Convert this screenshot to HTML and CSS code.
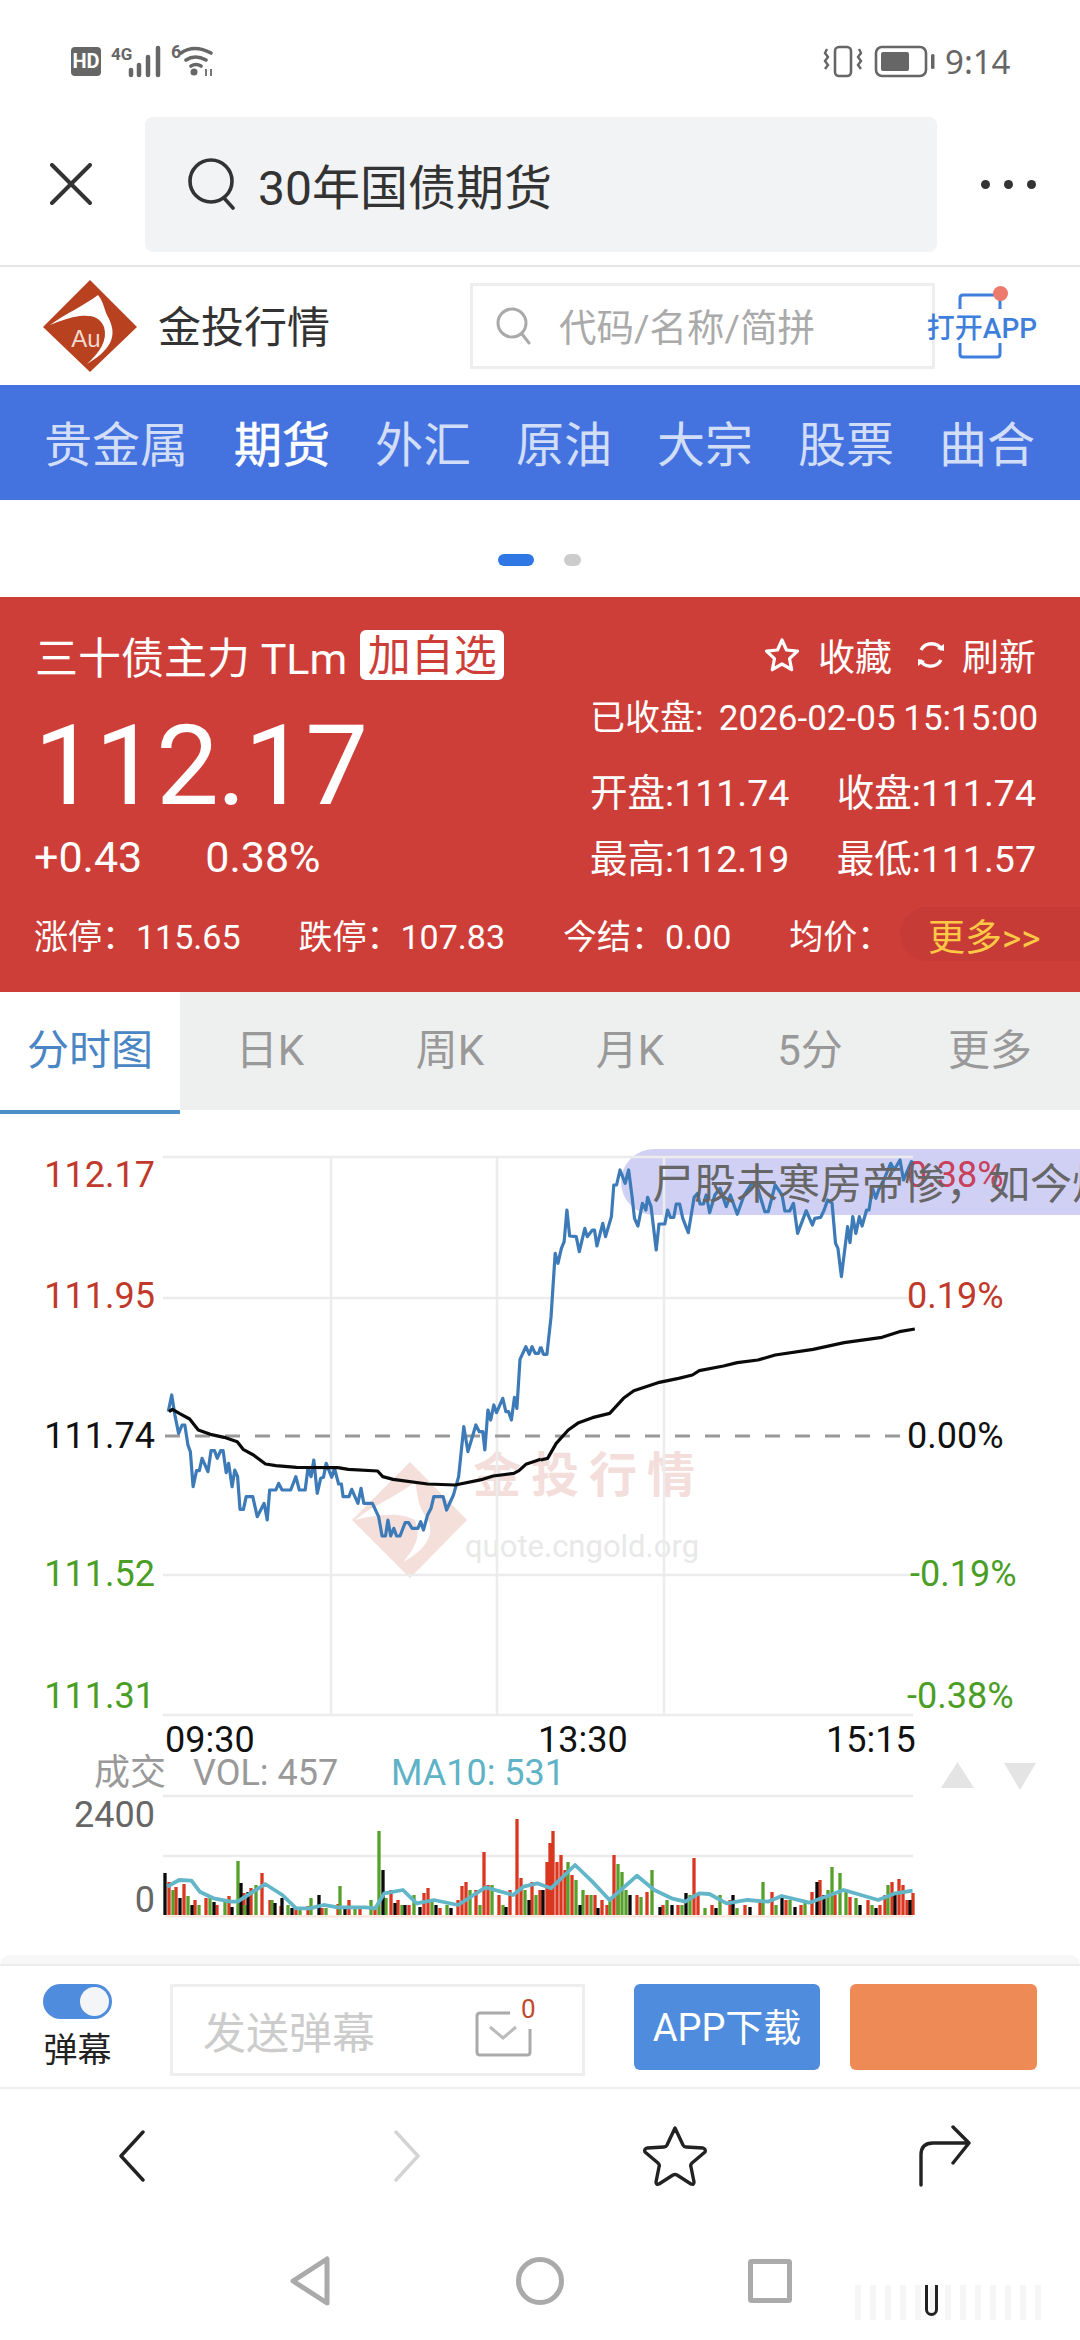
FILE: index.html
```html
<!DOCTYPE html>
<html lang="zh-CN">
<head>
<meta charset="utf-8">
<title>三十债主力 TLm</title>
<link rel="stylesheet" href="styles.css">
</head>
<body>
<div class="page">
  <div class="status">
    <svg class="status-left" width="145" height="34" viewBox="71 45 145 34">
      <rect x="71" y="47" width="30" height="29" rx="4" fill="#666"/>
      <text x="86" y="68" class="hd">HD</text>
      <text x="111" y="60" class="tiny">4G</text>
      <path d="M131 70v5M139 65v10M148 57v18M158 48v27" stroke="#666" stroke-width="4.5" stroke-linecap="round" fill="none"/>
      <text x="171" y="58" class="tiny big6">6</text>
      <path d="M181 53q13-9 30 0M186 60q9-6 20 0M191 66q5-3 10 0" stroke="#666" stroke-width="3.6" stroke-linecap="round" fill="none"/>
      <circle cx="194" cy="72" r="3.5" fill="#666"/>
      <path d="M206 69v7M211 69v7" stroke="#777" stroke-width="2" fill="none"/>
    </svg>
    <svg class="status-right" width="114" height="34" viewBox="821 45 114 34">
      <rect x="834" y="47" width="16" height="29" rx="4" fill="none" stroke="#666" stroke-width="2.6"/>
      <path d="M826 49l-2 4 3 4-3 4 3 4-3 4M858 49l2 4-3 4 3 4-3 4 3 4" fill="none" stroke="#666" stroke-width="2.4"/>
      <rect x="875" y="47" width="50" height="29" rx="6" fill="none" stroke="#666" stroke-width="2.6"/>
      <rect x="880" y="52" width="28" height="19" rx="2" fill="#666"/>
      <rect x="930" y="54" width="3.5" height="15" rx="1.5" fill="#666"/>
    </svg>
    <span class="clock">9:14</span>
  </div>

  <div class="topbar">
    <svg class="close" width="42" height="42" viewBox="0 0 42 42"><path d="M2 2l38 38M40 2L2 40" stroke="#333" stroke-width="4" stroke-linecap="round"/></svg>
    <div class="urlbox">
      <svg width="48" height="52" viewBox="0 0 48 52"><circle cx="23" cy="23" r="21" fill="none" stroke="#333" stroke-width="3.6"/><path d="M36 40l9 10" stroke="#333" stroke-width="3.6" stroke-linecap="round"/></svg>
      <span>30年国债期货</span>
    </div>
    <div class="dots"><i></i><i></i><i></i></div>
  </div>

  <div class="brandbar">
    <svg class="logo" width="94" height="93" viewBox="43 278 94 93">
      <path d="M90 278l47 47-47 45-47-45z" fill="#b8411f"/>
      <path d="M50 323C65 312 85 303 98 293c6 7 6 15 10 22 8 15 8 30-21 47 13-12 21-24 17-37-4-10-12-12-24-11-10 1-20 5-30 9z" fill="#fff"/>
      <text x="86" y="345" class="au">Au</text>
    </svg>
    <span class="brandname">金投行情</span>
    <div class="codesearch">
      <svg width="36" height="38" viewBox="0 0 36 38"><circle cx="17" cy="16" r="14" fill="none" stroke="#aaa" stroke-width="3"/><path d="M27 27l7 9" stroke="#aaa" stroke-width="3" stroke-linecap="round"/></svg>
      <span>代码/名称/简拼</span>
    </div>
    <div class="openapp">
      <svg class="openapp-frame" width="44" height="66" viewBox="0 0 44 66">
        <path d="M2 16V5q0-3 3-3h34q3 0 3 3v11M2 50v11q0 3 3 3h34q3 0 3-3V50" fill="none" stroke="#3f7fdc" stroke-width="3"/>
      </svg>
      <i class="openapp-dot"></i>
      <span>打开APP</span>
    </div>
  </div>

  <nav class="channels">
    <a>贵金属</a><a class="on">期货</a><a>外汇</a><a>原油</a><a>大宗</a><a>股票</a><a>曲合</a>
  </nav>

  <div class="pager"><i class="pill"></i><i class="dot"></i></div>

  <section class="quote">
    <div class="quote-head">
      <div class="qname">三十债主力 TLm<span class="addbtn">加自选</span></div>
      <div class="qacts">
        <svg width="36" height="36" viewBox="0 0 36 36"><path d="M18 3l4.500 10 11 1.200-8 7.500 2.200 11L18 27l-9.700 5.700 2.200-11-8-7.500 11-1.200z" fill="none" stroke="#fff" stroke-width="3.200" stroke-linejoin="round"/></svg>
        <span class="act-fav">收藏</span>
        <svg class="act-ref" width="30" height="34" viewBox="0 0 30 34"><path d="M5 12a12 12 0 0 1 21 0M25 22a12 12 0 0 1-21 0" fill="none" stroke="#fff" stroke-width="3.400"/><path d="M21 11l7 2 0-7zM9 23l-7-2 0 7z" fill="#fff"/></svg>
        <span>刷新</span>
      </div>
    </div>
    <div class="quote-body">
      <div class="qleft">
        <div class="price">112.17</div>
        <div class="change"><span>+0.43</span><span>0.38%</span></div>
      </div>
      <div class="qright">
        <div class="qtime">已收盘:  2026-02-05 15:15:00</div>
        <div class="qrow"><span>开盘:111.74</span><span>收盘:111.74</span></div>
        <div class="qrow"><span>最高:112.19</span><span>最低:111.57</span></div>
      </div>
    </div>
    <div class="quote-foot">
      <span>涨停：115.65</span><span>跌停：107.83</span><span>今结：0.00</span><span>均价：</span>
      <b class="morebtn">更多&gt;&gt;</b>
    </div>
  </section>

  <div class="periods">
    <a class="on">分时图</a><a>日K</a><a>周K</a><a>月K</a><a>5分</a><a>更多</a>
  </div>

  <svg class="chart" width="1080" height="845" viewBox="0 1110 1080 845">
    <g class="wm">
      <path d="M410 1462l57 58-57 58-58-58z" fill="#f4dfda"/>
      <path d="M355 1520c20-16 36-20 60-38 3 12 2 24 12 36 8 14 2 30-24 44 14-16 18-28 12-42-14-8-36-6-60 0z" fill="#fff"/>
      <text x="473" y="1492" class="wm-t">金投行情</text>
      <text x="465" y="1557" class="wm-u">quote.cngold.org</text>
    </g>
    <rect x="621" y="1149" width="520" height="66" rx="33" fill="#d0d0f5"/>
    <path class="grid" d="M163 1157H913M163 1298H913M163 1575H913M163 1715H913M331 1157V1715M497 1157V1715M664 1157V1715M163 1796H913M163 1856H913"/>
    <path class="dash" d="M165 1436H900"/>
    <g transform="translate(0 1120) scale(.34483 .33333)">
      <polyline class="ln blue" points="488,875 498,825 508,890 518,940 528,915 536,915 545,975 552,995 560,1100 570,1052 578,1052 586,1015 603,1055 612,992 622,992 630,1015 640,992 647,992 656,1058 663,1030 673,1100 681,1050 689,1070 696,1168 706,1168 714,1130 733,1130 746,1190 766,1150 775,1200 782,1110 800,1110 808,1090 818,1110 843,1110 858,1070 868,1110 885,1110 893,1045 902,1070 910,1020 920,1120 930,1075 938,1072 946,1030 962,1072 970,1045 982,1092 990,1092 995,1130 1012,1130 1020,1108 1038,1150 1047,1105 1055,1150 1080,1150 1098,1190 1108,1248 1118,1248 1125,1200 1133,1248 1142,1225 1150,1248 1160,1248 1175,1208 1185,1208 1195,1225 1212,1225 1220,1205 1228,1230 1240,1185 1250,1165 1258,1130 1285,1130 1295,1170 1315,1125 1330,1070 1345,920 1357,995 1380,915 1390,935 1400,935 1406,990 1415,870 1423,900 1432,855 1440,878 1458,835 1467,875 1475,875 1483,900 1492,832 1499,865 1508,718 1525,680 1535,703 1543,680 1552,700 1562,700 1568,680"/>
      <polyline class="ln black" points="490,875 500,868 520,880 550,897 575,930 610,943 650,952 688,965 705,988 735,1005 770,1032 800,1037 860,1042 980,1043 1010,1048 1095,1053 1110,1070 1140,1078 1240,1092 1320,1095 1400,1078 1430,1068 1490,1060 1505,1052 1525,1033 1568,1018"/>
    </g>
    <g transform="translate(540.700 1120) scale(.34483 .33333)">
      <polyline class="ln blue" points="0,680 8,703 18,703 30,590 42,400 50,430 60,385 68,365 76,270 84,348 103,350 112,395 128,325 135,350 150,330 156,330 163,378 180,310 188,350 205,290 212,195 220,195 230,150 245,190 255,150 265,230 272,295 282,318 295,250 305,270 310,232 320,260 335,390 343,312 360,312 368,270 376,292 386,292 393,252 403,252 412,295 428,338 445,232 455,220 462,252 472,252 480,225 490,278 505,225 520,205 538,260 550,225 570,283 590,225 612,190 625,190 650,275 660,275 680,195 700,225 708,273 722,273 733,250 745,340 770,272 788,315 795,295 812,292 822,270 832,240 845,250 855,370 862,385 872,470 890,320 897,368 905,290 914,340 924,290 932,318 945,270 952,270 962,205 972,235 980,210 995,180 1015,130 1025,150 1042,120 1052,180 1075,125 1085,130"/>
      <polyline class="ln black" points="0,1020 20,1015 45,970 80,930 110,908 150,893 200,880 240,835 270,812 340,788 400,775 440,765 460,752 530,738 570,728 630,720 680,705 790,688 880,668 990,652 1040,635 1085,627"/>
    </g>
    <text x="155" y="1187" class="yl up end">112.17</text>
    <text x="155" y="1308" class="yl up end">111.95</text>
    <text x="155" y="1448" class="yl end">111.74</text>
    <text x="155" y="1586" class="yl down end">111.52</text>
    <text x="155" y="1708" class="yl down end">111.31</text>
    <text x="907" y="1187" class="yl pink">0.38%</text>
    <text x="907" y="1308" class="yl up">0.19%</text>
    <text x="907" y="1448" class="yl">0.00%</text>
    <text x="910" y="1586" class="yl down">-0.19%</text>
    <text x="907" y="1708" class="yl down">-0.38%</text>
    <text x="652" y="1199" class="danmaku">尸股未寒房帝惨，如今炒</text>
    <text x="165" y="1752" class="yl">09:30</text>
    <text x="538" y="1752" class="yl">13:30</text>
    <text x="826" y="1752" class="yl">15:15</text>
    <text x="94" y="1785" class="vt grey">成交</text>
    <text x="193" y="1785" class="vt grey">VOL: 457</text>
    <text x="391" y="1785" class="vt cyan">MA10: 531</text>
    <polygon points="941,1788 957.500,1762 974,1788" fill="#e4e4e4"/>
    <polygon points="1004,1763 1036,1763 1020,1790" fill="#e4e4e4"/>
    <text x="155" y="1827" class="yl dim end">2400</text>
    <text x="155" y="1912" class="yl dim end">0</text>
    <path class="baseline" d="M165 1916.500H913"/>
    <path class="bar r" d="M169 1882V1915M176 1887V1915M184 1884V1915M195 1900V1915M206 1898V1915M217 1905V1915M229 1896V1915M244 1893V1915M251 1888V1915M262 1873V1915M270 1900V1915M281 1906V1915M296 1908V1915M308 1906V1915M322 1908V1915M338 1904V1915M349 1900V1915M360 1908V1915M375 1908V1915M391 1890V1915M398 1900V1915M409 1905V1915M424 1893V1915M428 1888V1915M440 1908V1915M458 1900V1915M462 1886V1915M466 1882V1915M476 1890V1915M484 1852V1915M488 1885V1915M499 1895V1915M510 1890V1915M517 1819V1915M521 1878V1915M532 1882V1915M540 1890V1915M547 1862V1915M550 1843V1915M553 1831V1915M557 1862V1915M561 1855V1915M565 1870V1915M572 1875V1915M587 1895V1915M595 1895V1915M602 1900V1915M607 1905V1915M614 1855V1915M618 1890V1915M637 1895V1915M647 1892V1915M663 1905V1915M678 1905V1915M694 1858V1915M698 1895V1915M712 1905V1915M730 1900V1915M745 1905V1915M760 1900V1915M772 1892V1915M786 1900V1915M801 1905V1915M812 1892V1915M820 1880V1915M835 1895V1915M850 1897V1915M868 1900V1915M880 1905V1915M885 1895V1915M892 1882V1915M899 1879V1915M903 1885V1915M907 1900V1915M913 1893V1915"/>
    <path class="bar g" d="M173 1890V1915M188 1896V1915M199 1905V1915M210 1898V1915M225 1900V1915M238 1861V1915M245 1905V1915M256 1885V1915M272 1900V1915M288 1905V1915M300 1908V1915M311 1898V1915M326 1908V1915M340 1886V1915M355 1908V1915M371 1900V1915M379 1831V1915M386 1898V1915M402 1905V1915M414 1895V1915M432 1900V1915M447 1905V1915M470 1890V1915M480 1905V1915M492 1885V1915M503 1905V1915M525 1890V1915M536 1895V1915M568 1862V1915M576 1880V1915M583 1890V1915M591 1895V1915M610 1900V1915M618 1864V1915M622 1872V1915M626 1890V1915M641 1897V1915M652 1870V1915M667 1900V1915M682 1905V1915M690 1895V1915M705 1908V1915M720 1895V1915M737 1908V1915M763 1882V1915M776 1905V1915M790 1900V1915M805 1900V1915M828 1890V1915M832 1867V1915M840 1873V1915M846 1890V1915M856 1898V1915M872 1905V1915M888 1885V1915"/>
    <path class="bar k" d="M165 1873V1915M180 1898V1915M192 1905V1915M214 1902V1915M232 1907V1915M241 1883V1915M248 1892V1915M275 1903V1915M282 1898V1915M292 1908V1915M319 1895V1915M345 1908V1915M383 1870V1915M395 1903V1915M405 1905V1915M420 1907V1915M436 1905V1915M451 1908V1915M506 1907V1915M529 1900V1915M543 1890V1915M580 1905V1915M598 1908V1915M630 1895V1915M660 1907V1915M672 1905V1915M686 1893V1915M716 1908V1915M733 1895V1915M750 1907V1915M782 1895V1915M795 1907V1915M817 1882V1915M824 1895V1915M860 1905V1915M876 1908V1915M895 1895V1915M910 1900V1915"/>
    <g transform="translate(0 1720) scale(.68871 .33333)">
      <polyline class="ln cy" points="243,500 260,480 278,482 290,515 310,535 335,545 345,545 385,492 410,525 430,565 450,565 470,555 490,562 530,562 545,565 558,520 585,510 605,550 630,540 665,555 705,502 745,525 760,500 780,490 800,505 835,435 860,485 885,540 925,467 950,510 975,535 995,545 1015,520 1030,522 1055,550 1085,540 1115,545 1135,528 1175,548 1225,510 1275,540 1300,520 1325,512"/>
    </g>
  </svg>

  <div class="band"></div>

  <div class="sendbar">
    <div class="togglecol">
      <div class="toggle"><i></i></div>
      <span>弹幕</span>
    </div>
    <div class="sendinput">
      <span>发送弹幕</span>
      <svg class="envelope" width="62" height="62" viewBox="0 0 62 62">
        <path d="M36 17H6q-3 0-3 3v36q0 3 3 3h47q3 0 3-3V33" fill="none" stroke="#aaa" stroke-width="3"/>
        <path d="M16 31l13 11 13-11" fill="none" stroke="#bbb" stroke-width="3"/>
        <text x="47" y="22" class="env0">0</text>
      </svg>
    </div>
    <a class="btn btn-blue">APP下载</a>
    <a class="btn btn-orange"></a>
  </div>

  <div class="toolbar">
    <svg class="tb-back" width="30" height="52" viewBox="0 0 30 52"><path d="M26 2L4 26l22 24" fill="none" stroke="#222" stroke-width="3.400" stroke-linecap="round" stroke-linejoin="round"/></svg>
    <svg class="tb-fwd" width="30" height="52" viewBox="0 0 30 52"><path d="M4 2l22 24L4 50" fill="none" stroke="#d4d4d4" stroke-width="3.400" stroke-linecap="round" stroke-linejoin="round"/></svg>
    <svg width="66" height="62" viewBox="0 0 66 62"><path d="M33 3l8 17q1 2 3 2l17 1q3 1 2 4L50 38q-2 2-1 4l3 15q0 3-3 2L35 50q-2-1-4 0L17 59q-3 1-3-2l3-15q1-2-1-4L3 27q-1-3 2-4l17-1q2 0 3-2z" fill="none" stroke="#222" stroke-width="3.400" stroke-linejoin="round"/></svg>
    <svg width="56" height="62" viewBox="0 0 56 62"><path d="M4 60V30q0-12 12-12h36M36 2l16 16-16 20" fill="none" stroke="#222" stroke-width="3.400" stroke-linecap="round" stroke-linejoin="round"/></svg>
  </div>

  <div class="sysnav">
    <svg width="42" height="50" viewBox="0 0 42 50"><path d="M38 3v44L4 25z" fill="none" stroke="#aaa" stroke-width="5" stroke-linejoin="round"/></svg>
    <svg width="48" height="50" viewBox="0 0 48 50"><circle cx="24" cy="25" r="21.500" fill="none" stroke="#aaa" stroke-width="5"/></svg>
    <svg width="44" height="44" viewBox="0 0 44 44"><rect x="2.500" y="2.500" width="39" height="39" rx="1" fill="none" stroke="#aaa" stroke-width="5"/></svg>
    <div class="wmark"><i></i></div>
  </div>
</div>
</body>
</html>
```
FILE: styles.css
```css
* { box-sizing: border-box; }
html, body { margin: 0; padding: 0; background: #fff; }
body { font-family: Roboto, "Noto Sans CJK SC", sans-serif; }
.page { width: 1080px; height: 2340px; overflow: hidden; }
i { display: block; font-style: normal; }
a { display: block; }

/* status bar */
.status { height: 103px; display: flex; align-items: flex-start; padding: 45px 0 0 71px; }
.status-right { margin-left: 606px; }
.clock { margin-left: 9px; font: 33px/34px "Noto Sans", sans-serif; color: #666; }
.hd { font: 700 20px Roboto, sans-serif; fill: #fff; text-anchor: middle; }
.tiny { font: 700 17px "Roboto", sans-serif; fill: #666; }
.big6 { font-size: 18px; }

/* top bar */
.topbar { height: 164px; display: flex; align-items: center; padding: 0 0 0 50px; border-bottom: 2px solid #e6e6e6; }
.close { flex: none; }
.urlbox { margin-left: 53px; width: 792px; height: 135px; border-radius: 8px; background: #f1f3f5; display: flex; align-items: center; padding-left: 43px; font-size: 48px; color: #333; }
.urlbox span { margin-left: 22px; }
.dots { display: flex; gap: 14px; margin-left: 44px; }
.dots i { width: 9px; height: 9px; border-radius: 50%; background: #333; }

/* brand bar */
.brandbar { height: 118px; display: flex; align-items: center; padding-left: 43px; }
.logo { flex: none; }
.au { font: 24px "Liberation Sans", sans-serif; fill: #f3d8cc; text-anchor: middle; }
.brandname { margin: -5px 0 0 21px; font-size: 43px; color: #333; width: 172px; white-space: nowrap; }
.codesearch { margin: -1px 0 0 140px; width: 465px; height: 86px; border: 3px solid #eee; display: flex; align-items: center; padding-left: 22px; font-size: 37.500px; color: #aaa; }
.codesearch span { margin: -3px 0 0 28px; white-space: nowrap; }
.openapp { position: relative; margin-left: -8px; width: 110px; height: 66px; display: flex; align-items: center; justify-content: center; }
.openapp span { position: relative; font-size: 28px; font-weight: 500; color: #3f7fdc; white-space: nowrap; }
.openapp-frame { position: absolute; left: 31px; top: 0; }
.openapp-dot { position: absolute; left: 66px; top: -7px; width: 15px; height: 15px; border-radius: 50%; background: #ee7a6e; }

/* channels */
.channels { height: 115px; background: #4473e0; display: flex; align-items: center; gap: 45px; padding: 0 0 3px 44px; font-size: 48px; color: #d2def8; white-space: nowrap; }
.channels a:first-child { margin-right: 1px; }
.channels .on { color: #fff; -webkit-text-stroke: .6px #fff; }

/* pager */
.pager { height: 97px; display: flex; align-items: center; padding: 22px 0 0 498px; }
.pill { width: 36px; height: 12px; border-radius: 6px; background: #2f78e4; }
.dot { margin-left: 30px; width: 17px; height: 12px; border-radius: 6px; background: #ccc; }

/* quote panel */
.quote { height: 395px; background: #ce3e38; color: #fff; }
.quote-head { display: flex; justify-content: space-between; padding: 33px 44px 0 35px; height: 83px; }
.qname { display: flex; align-items: center; height: 50px; font-size: 43px; white-space: nowrap; }
.addbtn { margin-left: 13px; width: 144px; height: 50px; background: #fff; border-radius: 6px; color: #ce3e38; font-size: 43px; line-height: 52px; text-align: center; }
.qacts { display: flex; align-items: center; height: 50px; font-size: 37px; }
.act-fav { margin-left: 18px; }
.act-ref { margin: 0 16px 0 24px; }
.quote-body { display: flex; justify-content: space-between; padding: 0 44px 0 34px; height: 204px; }
.price { margin-top: 26px; font-size: 112px; line-height: 120px; letter-spacing: -2px; }
.change { margin-top: 6px; display: flex; gap: 63px; font-size: 43px; line-height: 50px; }
.qright { width: 446px; padding-top: 19px; }
.qtime { font-size: 35px; line-height: 40px; white-space: pre; word-spacing: -1px; }
.qrow { display: flex; justify-content: space-between; font-size: 37.500px; line-height: 50px; margin-top: 16px; }
.qtime + .qrow { margin-top: 29px; }
.quote-foot { display: flex; align-items: center; padding-left: 34px; height: 54px; margin-top: 23px; font-size: 34px; gap: 58px; white-space: nowrap; }
.quote-foot span:nth-child(4) { margin-right: -50px; }
.morebtn { margin-left: auto; width: 180px; height: 54px; border-radius: 27px 0 0 27px; background: #c63b35; color: #ffc845; font-weight: 400; font-size: 37px; line-height: 64px; padding-left: 28px; }

/* period tabs */
.periods { height: 118px; display: grid; grid-template-columns: repeat(6, 180px); background: #eeefef; font-size: 42px; color: #999; line-height: 118px; text-align: center; }
.periods .on { background: #fff; color: #4a86c4; border-bottom: 4px solid #4f8fc9; }

/* chart */
.chart { display: block; }
.grid { stroke: #ececec; stroke-width: 2.500; fill: none; }
.dash { stroke: #999; stroke-width: 3; stroke-dasharray: 15 15; fill: none; }
.ln { fill: none; vector-effect: non-scaling-stroke; stroke-linejoin: round; }
.blue { stroke: #3d7ab8; stroke-width: 3.200; }
.black { stroke: #0a0a0a; stroke-width: 3.200; }
.cy { stroke: #62b6c8; stroke-width: 3.800; }
.yl { font: 36px Roboto, sans-serif; fill: #111; }
.end { text-anchor: end; }
.up { fill: #c0392b; }
.pink { fill: #c8405a; }
.down { fill: #4a9e26; }
.dim { fill: #666; }
.danmaku { font: 42px "Noto Sans CJK SC", sans-serif; fill: #666; }
.vt { font: 36px Roboto, "Noto Sans CJK SC", sans-serif; }
.grey { fill: #999; }
.cyan { fill: #5fb3c6; }
.wm-t { font: 700 48px "Noto Sans CJK SC", sans-serif; fill: #f3dedb; letter-spacing: 10px; }
.wm-u { font: 31px Roboto, sans-serif; fill: #e8e8e8; }
.baseline { stroke: #fbe3d9; stroke-width: 2; fill: none; }
.bar { fill: none; stroke-width: 3.300; }
.r { stroke: #d9371f; }
.g { stroke: #56a02c; }
.k { stroke: #0b0b0b; }

/* send bar */
.band { height: 11px; background: #f7f7f7; border-radius: 10px 10px 0 0; border-bottom: 2px solid #ececec; }
.sendbar { height: 123px; display: flex; align-items: flex-start; padding: 18px 0 0 43px; border-bottom: 2px solid #eee; }
.togglecol { width: 69px; text-align: center; font-size: 34px; color: #222; line-height: 46px; }
.togglecol span { display: block; margin-top: 8px; white-space: nowrap; }
.toggle { height: 35px; border-radius: 18px; background: #4f8cdd; position: relative; }
.toggle i { position: absolute; right: 3px; top: 3px; width: 29px; height: 29px; border-radius: 50%; background: #f4f5f7; }
.sendinput { margin-left: 58px; width: 415px; height: 92px; border: 3px solid #eee; display: flex; align-items: center; justify-content: space-between; padding: 0 46px 0 30px; font-size: 43px; color: #ccc; }
.envelope { margin-top: -7px; }
.env0 { font: 26px Roboto, sans-serif; fill: #c0492b; }
.btn { height: 86px; width: 186px; border-radius: 6px; text-align: center; font-size: 38px; line-height: 88px; color: #fff; white-space: nowrap; }
.btn-blue { margin-left: 49px; background: #4f8cdd; }
.btn-orange { margin-left: 30px; width: 187px; background: #ee8a55; }

/* toolbar */
.toolbar { height: 133px; display: grid; grid-template-columns: repeat(4, 270px); align-items: center; justify-items: center; }
.tb-back { margin-right: 6px; }
.tb-fwd { margin-left: 4px; }

/* system nav */
.sysnav { position: relative; height: 118px; display: grid; grid-template-columns: repeat(3, 230px); justify-content: center; justify-items: center; align-items: center; }
.wmark { position: absolute; left: 855px; top: 63px; width: 195px; height: 35px; background: repeating-linear-gradient(90deg, #f6f6f6 0 6px, #fff 6px 15px); }
.wmark i { position: absolute; left: 70px; top: 0; width: 13px; height: 31px; border: 3px solid #222; border-top: 0; border-radius: 0 0 7px 7px; }
```
